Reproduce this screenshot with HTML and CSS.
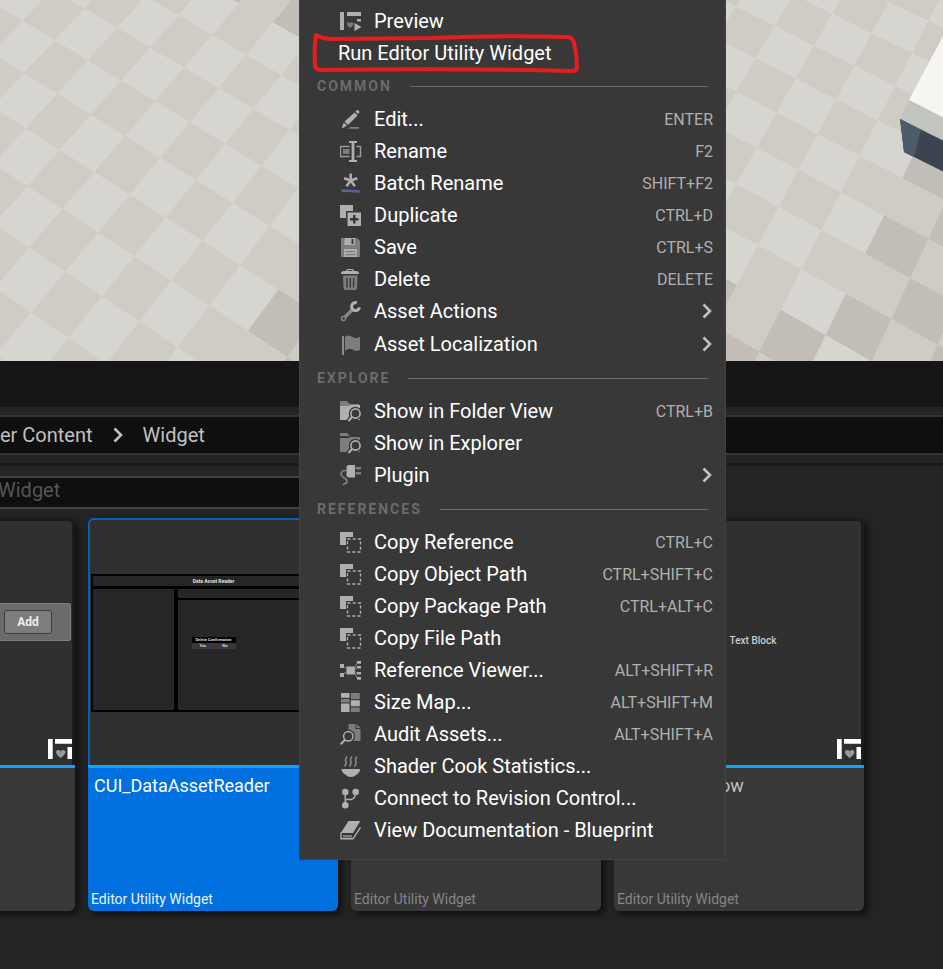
FILE: index.html
```html
<!DOCTYPE html>
<html lang="en">
<head>
<meta charset="utf-8">
<title>Content Browser</title>
<link rel="stylesheet" href="styles.css">
</head>
<body>
<svg class="defs" aria-hidden="true">
  <symbol id="copy" viewBox="0 0 22 22"><path class="a" d="M0 1h13v5H6v8H0z"/><rect x="7.5" y="8" width="13" height="13" fill="none" stroke="#b0b0b0" stroke-width="1.4" stroke-dasharray="3 2.2"/></symbol>
  <symbol id="badge" viewBox="0 0 24 20"><path fill="#fff" d="M0 0h4.700v20H0zM7 0h17v4.700H7zM19.500 8H24v12h-4.500z"/><path fill="#999" d="M12.700 19C9 16 8 14.500 8 13c0-2.500 3.500-2.800 4.700-.6 1.200-2.200 4.700-1.900 4.700.6 0 1.500-1 3-4.700 6z"/></symbol>
  <symbol id="chevron" viewBox="0 0 10 16"><path d="M1.500 1.500 8 8l-6.500 6.500" fill="none" stroke="currentColor" stroke-width="2.600"/></symbol>
  <symbol id="lens" viewBox="0 0 22 22"><circle cx="15.500" cy="13.500" r="6.700" fill="#383838"/><path d="m12 17-4 5" stroke="#383838" stroke-width="5"/><circle cx="15.500" cy="13.500" r="4.600" fill="none" stroke="#b0b0b0" stroke-width="1.600"/><path d="m12 17-3.500 4" stroke="#b0b0b0" stroke-width="2"/></symbol>
</svg>

<main class="editor">
  <svg class="scene" id="scene" role="img" aria-label="Level viewport">
    <rect width="100%" height="100%" fill="#cfccc6"/>
    <g id="floor"></g>
    <path fill="#f6f5f1" d="M944 34 909 100l35 18z"/>
    <path fill="#c1c5be" d="m909 100 35 18v24l-44-23z"/>
    <path fill="#3b4450" d="m900 119 44 22v31l-40-20z"/>
    <path fill="#4c5a69" d="m900 119 21 11-7 27-10-5z"/>
  </svg>
  <div class="band"></div>
  <nav class="crumbs" aria-label="Path">
    <a href="#user">er Content</a>
    <svg class="chev"><use href="#chevron"/></svg>
    <a href="#widget">Widget</a>
  </nav>
  <div class="browser">
    <input class="search" type="text" aria-label="Search" placeholder="Widget">
    <div class="tiles">
      <article class="tile">
        <div class="thumb thumb-add">
          <div class="addbar"><button class="add">Add</button></div>
          <svg class="badge"><use href="#badge"/></svg>
        </div>
        <div class="info"></div>
      </article>
      <article class="tile selected">
        <div class="thumb">
          <div class="reader">
            <div class="reader-title">Data Asset Reader</div>
            <div class="reader-body"><div></div><div class="reader-main"><div></div><div></div></div></div>
            <div class="dialog"><div class="dialog-title">Delete Confirmation</div><div class="dialog-row"><span>Yes</span><span>No</span></div></div>
          </div>
        </div>
        <div class="info"><span class="name">CUI_DataAssetReader</span><span class="type">Editor Utility Widget</span></div>
      </article>
      <article class="tile">
        <div class="thumb"></div>
        <div class="info"><span class="type">Editor Utility Widget</span></div>
      </article>
      <article class="tile">
        <div class="thumb thumb-text">
          <span>Text Block</span>
          <svg class="badge"><use href="#badge"/></svg>
        </div>
        <div class="info"><span class="name name-tail">ow</span><span class="type">Editor Utility Widget</span></div>
      </article>
    </div>
  </div>
</main>

<div class="menu" role="menu">
  <button class="item"><svg class="icon" viewBox="0 0 22 22"><path class="a" d="M0 2h4v18H0zM7 2h14v4H7zM17 9h4v2.500h-4zM14.500 13l7 4-7 4z"/><path class="d" d="M10.200 18C7.500 16 7 15 7 14c0-2 2.500-2.300 3.200-.6.700-1.700 3.200-1.400 3.200.6 0 1-.6 2-3.200 4z"/></svg><span>Preview</span></button>
  <button class="item plain"><span>Run Editor Utility Widget</span></button>

  <h2 class="head">COMMON</h2>
  <button class="item"><svg class="icon" viewBox="0 0 22 22"><path class="a" d="m15.500 3.500 1.200-1.200q1.100-.6 2.100.4t.4 2.100L18 6zM14.600 4.500l3 3L8 17l-3.500-3.500zM3.800 14.500 7 17.700 1.500 20.500z"/><path class="d" d="M10 19h9v1.800H8z"/></svg><span>Edit...</span><kbd>ENTER</kbd></button>
  <button class="item"><svg class="icon" viewBox="0 0 22 22"><path class="a" d="M9 1h8v2h-2.600v17H17v2H9v-2h2.600V3H9z"/><path d="M9.500 6.500h-9v10h9M16.500 6.500h4v10h-4" fill="none" stroke="#999" stroke-width="1.400"/><path class="d" d="M3 9h6.500v5H3z"/></svg><span>Rename</span><kbd>F2</kbd></button>
  <button class="item"><svg class="icon" viewBox="0 0 22 22"><path d="M10.700 8.500V1.500M10.700 8.500 4 6.300M10.700 8.500l6.700-2.200M10.700 8.500l-4.200 5.800M10.700 8.500l4.200 5.800" stroke="#b0b0b0" stroke-width="2.500"/><path d="m1.300 18.500 18.700 1" stroke="#52659b" stroke-width="2.400"/></svg><span>Batch Rename</span><kbd>SHIFT+F2</kbd></button>
  <button class="item"><svg class="icon" viewBox="0 0 22 22"><path class="a" d="M0 1h13v6H6v7H0z"/><path class="a" fill-rule="evenodd" d="M7.500 8.500H21V22H7.500zM13 11v3h-3v2.500h3v3h2.500v-3h3V14h-3v-3z"/></svg><span>Duplicate</span><kbd>CTRL+D</kbd></button>
  <button class="item"><svg class="icon" viewBox="0 0 22 22"><path class="d" d="M1 2h16l3 3v16H1z"/><path class="a" d="M4.500 2H15v7H4.500zM4 13h13v8H4z"/><path fill="#383838" d="M11.500 3h2v5h-2z"/><path class="d" d="M5.500 15h10v1.200h-10zM5.500 18h10v1.200h-10z"/></svg><span>Save</span><kbd>CTRL+S</kbd></button>
  <button class="item"><svg class="icon" viewBox="0 0 22 22"><path class="a" fill-rule="evenodd" d="M1 6q0-3 3-3h2q0-2 2-2h4q2 0 2 2h2q3 0 3 3zM7.500 3h5q0-1-1-1h-3q-1 0-1 1z"/><path class="d" d="M3 7.500h14.500L17 20q0 2-2 2H5.500q-2 0-2-2z"/><path d="M7 10v9.500M10.300 10v9.500M13.600 10v9.500" stroke="#383838" stroke-width="1.400"/></svg><span>Delete</span><kbd>DELETE</kbd></button>
  <button class="item sub"><svg class="icon" viewBox="0 0 22 22"><path d="M4 18 12 10" stroke="#858585" stroke-width="3.600"/><circle cx="3.500" cy="18.500" r="2" fill="#383838" stroke="#858585" stroke-width="1.500"/><path d="M16.800 2.800a4 4 0 1 0 2.700 4.600" fill="none" stroke="#b0b0b0" stroke-width="3"/></svg><span>Asset Actions</span><svg class="chev"><use href="#chevron"/></svg></button>
  <button class="item sub"><svg class="icon" viewBox="0 0 22 22"><path class="a" d="M2.300 3h1.400v19H2.300z"/><path class="d" d="M5 4q4-3 7.500 0 3.500 2 7.500 0v13q-4 2-7.500-.5Q9 14.500 5 18z"/></svg><span>Asset Localization</span><svg class="chev"><use href="#chevron"/></svg></button>

  <h2 class="head">EXPLORE</h2>
  <button class="item"><svg class="icon" viewBox="0 0 22 22"><path class="d" d="M0 1h7l3 3h9v2H0z"/><path class="a" d="M0 6h8.500l1.500-1h10v15H0z"/><use href="#lens"/></svg><span>Show in Folder View</span><kbd>CTRL+B</kbd></button>
  <button class="item"><svg class="icon" viewBox="0 0 22 22"><path class="d" d="M0 1h7l3 3H0zM0 6h8.500l1.500-1h10v15H0z"/><use href="#lens"/></svg><span>Show in Explorer</span></button>
  <button class="item sub"><svg class="icon" viewBox="0 0 22 22"><path class="a" d="M9 1h6v12.500H9q-2.500 0-2.500-2.500V3.500Q6.500 1 9 1z"/><path class="d" d="M15.700 3H21v2.400h-5.300zM15.700 8H21v2.400h-5.300z"/><path d="M6.500 6.500C1 6 0 10 2.500 12.500s5 2.500 4.500 5-3 2-4 3.500" fill="none" stroke="#858585" stroke-width="1.600"/></svg><span>Plugin</span><svg class="chev"><use href="#chevron"/></svg></button>

  <h2 class="head">REFERENCES</h2>
  <button class="item"><svg class="icon"><use href="#copy"/></svg><span>Copy Reference</span><kbd>CTRL+C</kbd></button>
  <button class="item"><svg class="icon"><use href="#copy"/></svg><span>Copy Object Path</span><kbd>CTRL+SHIFT+C</kbd></button>
  <button class="item"><svg class="icon"><use href="#copy"/></svg><span>Copy Package Path</span><kbd>CTRL+ALT+C</kbd></button>
  <button class="item"><svg class="icon"><use href="#copy"/></svg><span>Copy File Path</span></button>
  <button class="item"><svg class="icon" viewBox="0 0 22 22"><path d="m2 7 6 3.500M2 16l6-4M14 10l3.500-6.500M14 11.500l3.500-3M14 12l3.500 2.500M14 12.500l3.500 7" stroke="#858585"/><path class="a" d="M6.500 7.500h8.300v8H6.500zM0 5h4v4H0zM0 14h4v4H0zM17 2h4v2.800h-4zM17 7h4v2.600h-4zM17 13h4v2.600h-4zM17 18h4v2.800h-4z"/></svg><span>Reference Viewer...</span><kbd>ALT+SHIFT+R</kbd></button>
  <button class="item"><svg class="icon" viewBox="0 0 22 22"><path class="a" d="M1 2h8.500v4.800H1zM10.800 9.300h9v6h-9zM1 12.600h8.500V21H1z"/><path class="d" d="M10.800 2h9v6h-9zM1 8h8.500v3.400H1zM10.800 16.600h9V21h-9z"/></svg><span>Size Map...</span><kbd>ALT+SHIFT+M</kbd></button>
  <button class="item"><svg class="icon" viewBox="0 0 22 22"><path class="d" d="M8.500 1h7v5h5v12h-12zM16.500 1l4.200 4h-4.200z"/><circle cx="8.300" cy="13.300" r="6.800" fill="#383838"/><circle cx="8.300" cy="13.300" r="4.700" fill="none" stroke="#b0b0b0" stroke-width="1.500"/><path d="M5 16.800.7 21.300" stroke="#b0b0b0" stroke-width="2"/></svg><span>Audit Assets...</span><kbd>ALT+SHIFT+A</kbd></button>
  <button class="item"><svg class="icon" viewBox="0 0 22 22"><path class="a" d="M1.500 14H20q0 3.500-4 6-2 2-5.200 2T6 20q-4.500-2.500-4.500-6z"/><path d="M7 1.500c-4 4 1.500 5-2.500 10M12 1.500c-4 4 1.500 5-2.500 10M17 1.500c-4 4 1.500 5-2.500 10" fill="none" stroke="#858585" stroke-width="1.700"/></svg><span>Shader Cook Statistics...</span></button>
  <button class="item"><svg class="icon" viewBox="0 0 22 22"><path d="M5.300 5v13M5.300 12.500h6q4-1 4.400-7" fill="none" stroke="#b0b0b0" stroke-width="1.500"/><circle class="a" cx="5.300" cy="5" r="3.300"/><circle class="a" cx="15.700" cy="5" r="3.300"/><circle class="a" cx="5.300" cy="18.300" r="3.300"/></svg><span>Connect to Revision Control...</span></button>
  <button class="item"><svg class="icon" viewBox="0 0 22 22"><path class="a" d="M8.500 2h11.800L13 14H.8z"/><path d="M1 13.500v6.300h12l7.500-11.500" fill="none" stroke="#b0b0b0" stroke-width="1.400"/><path class="d" d="M3 16h9v2.500H3z"/></svg><span>View Documentation - Blueprint</span></button>

  <svg class="marker" viewBox="0 0 270 42" aria-hidden="true"><path d="M4 4 Q11 8 20 8 L120 7 Q190 4 255 6 Q261 6 262 12 Q265 24 265 37 Q264 40 260 40 Q150 37 8 39 Q3 38 3 34 Q2 16 4 4z" fill="none" stroke="#e81c1f" stroke-width="4" stroke-linejoin="round"/></svg>
</div>
<script src="floor.js"></script>
</body>
</html>
```
FILE: styles.css
```css
* { box-sizing: border-box; }
html, body { margin: 0; min-height: 100%; }
body {
  position: relative;
  background: #242424;
  color: #c0c0c0;
  font-family: Roboto, "Liberation Sans", sans-serif;
  font-size: 20px;
  overflow: hidden;
}
button { font: inherit; color: inherit; border: 0; background: none; }
svg { display: block; flex: none; }
.defs { position: absolute; width: 0; height: 0; }
.a { fill: #b0b0b0; }
.d { fill: #7d7d7d; }

.editor { min-height: 100vh; }
.scene { width: 100%; height: 361px; }
.band { height: 46px; background: #151515; }

.crumbs {
  display: flex;
  align-items: center;
  gap: 20px;
  height: 40px;
  margin-top: 8px;
  background: #0f0f0f;
  border: solid #343434;
  border-width: 2px 0;
}
.crumbs a { color: inherit; text-decoration: none; }
.chev { width: 10px; height: 16px; color: #c0c0c0; }

.browser {
  margin-top: 8px;
  border-top: 3px solid #1a1a1a;
  padding-top: 10px;
  overflow: hidden;
}
.search {
  display: block;
  width: 50%;
  height: 33px;
  padding: 0 0 6px;
  background: #0f0f0f;
  border: solid #424242;
  border-width: 2px 0;
  color: #c0c0c0;
  font: inherit;
  text-indent: -2px;
}
.search::placeholder { color: #555; opacity: 1; }

.tiles {
  display: flex;
  gap: 13px;
  margin: 9px 0 0 -175px;
  padding-bottom: 50px;
}
.tile {
  flex: none;
  display: flex;
  flex-direction: column;
  width: 250px;
  border-radius: 6px;
  background: #383838;
  box-shadow: 4px 4px 6px rgba(0, 0, 0, .55);
}
.thumb {
  position: relative;
  display: flex;
  flex-direction: column;
  justify-content: center;
  height: 247px;
  border: solid #1b1b1b;
  border-width: 3px 3px 0;
  border-radius: 6px 6px 0 0;
  background: #303030;
}
.info {
  display: flex;
  flex-direction: column;
  height: 146px;
  padding: 7px 3px 3px;
  border-top: 3px solid #0ea5f8;
}
.name { padding-left: 3px; font-size: 18px; line-height: 22px; }
.name-tail { padding-left: 103px; }
.type { margin-top: auto; font-size: 14px; line-height: 18px; color: #858585; }
.selected { background: #0070e0; color: #fff; }
.selected .thumb { border-color: #0a5fb5; border-width: 2px 2px 0; padding-left: 1px; }
.selected .type { color: #e8f2ff; }
.badge { position: absolute; right: 0; bottom: 6px; width: 24px; height: 20px; }

.thumb-add { justify-content: flex-start; padding-top: 82px; }
.addbar {
  display: flex;
  justify-content: flex-end;
  margin-right: 1px;
  padding: 6px 18px;
  background: #6b6b6b;
  border: 1px solid #7d7d7d;
  border-radius: 2px;
}
.add {
  width: 48px;
  height: 24px;
  padding: 0;
  border: 1px solid #3c3c3c;
  border-radius: 3px;
  background: #7d7d7d;
  color: #eee;
  font-size: 12px;
  font-weight: 700;
}
.thumb-text { align-items: center; padding: 0 0 6px 28px; font-size: 10px; font-weight: 500; color: #ccc; }

.reader {
  position: relative;
  display: flex;
  flex-direction: column;
  gap: 3px;
  height: 138px;
  padding: 2px;
  background: #000;
}
.reader-title {
  height: 10px;
  background: #262626;
  color: #e0e0e0;
  font-size: 5px;
  font-weight: 700;
  line-height: 10px;
  text-align: center;
}
.reader-body { flex: 1; display: grid; grid-template-columns: 81px 1fr; gap: 4px; }
.reader-body > div:first-child, .reader-main > div { background: #262626; }
.reader-main { display: grid; grid-template-rows: 9px 1fr; gap: 2px; }
.dialog {
  position: absolute;
  left: 50%;
  top: 50%;
  width: 44px;
  margin: -6px 0 0 -22px;
  background: #383838;
  color: #ddd;
  font-size: 4px;
  font-weight: 700;
  line-height: 6px;
  text-align: center;
}
.dialog-title { background: #000; }
.dialog-row { display: flex; justify-content: space-around; }

.menu {
  position: absolute;
  top: 0;
  left: 299px;
  width: 427px;
  padding: 5px 0 13px;
  background: #383838;
  border: solid #424242;
  border-width: 0 1px 1px;
  color: #fff;
}
.item {
  display: flex;
  align-items: center;
  width: 100%;
  height: 32px;
  padding: 0 12px 0 40px;
  text-align: left;
}
.sub { height: 33px; padding: 0 13px 1px 40px; }
.plain { padding-left: 38px; }
.icon { width: 22px; height: 22px; margin-right: 12px; }
.item span { flex: 1; white-space: nowrap; }
.item kbd { font: inherit; font-size: 16px; color: #b0b0b0; }
.head {
  display: flex;
  align-items: center;
  gap: 18px;
  height: 34px;
  margin: 0;
  padding: 0 17px;
  color: #6b6b6b;
  font-size: 14px;
  font-weight: 700;
  letter-spacing: 2px;
}
.head::after { content: ""; flex: 1; height: 1px; background: #6b6b6b; }
.marker { position: absolute; left: 12px; top: 31px; width: 270px; height: 42px; pointer-events: none; }
```
FILE: floor.js
```js
// Chequered floor seen in perspective: blocks of 10 x 10 squares alternate
// between a light/mid and a mid/dark pair; the mid tone is the background.
const BLOCK = 10;

function project(i, j) {
  const w = 1 - 0.0109 * i - 0.018 * j;
  const x = (825.7 + 36.5 * i - 35.4 * j) / w;
  const y = (335.3 + 22.1 * i + 36.15 * j) / w;
  return [x, y];
}

const floor = document.getElementById("floor");
for (let i = -32; i < 14; i++) {
  for (let j = -22; j < 18; j++) {
    const even = (i + j) % 2 === 0;
    const lightBlock = (Math.floor(i / BLOCK) + Math.floor(j / BLOCK)) % 2 === 0;
    if (even !== lightBlock) continue;
    const corners = [project(i, j), project(i + 1, j), project(i + 1, j + 1), project(i, j + 1)];
    const tile = document.createElementNS("http://www.w3.org/2000/svg", "polygon");
    tile.setAttribute("points", corners.map((p) => p.join(",")).join(" "));
    tile.setAttribute("fill", even ? "#d7d5cf" : "#c2beb7");
    floor.append(tile);
  }
}
```
